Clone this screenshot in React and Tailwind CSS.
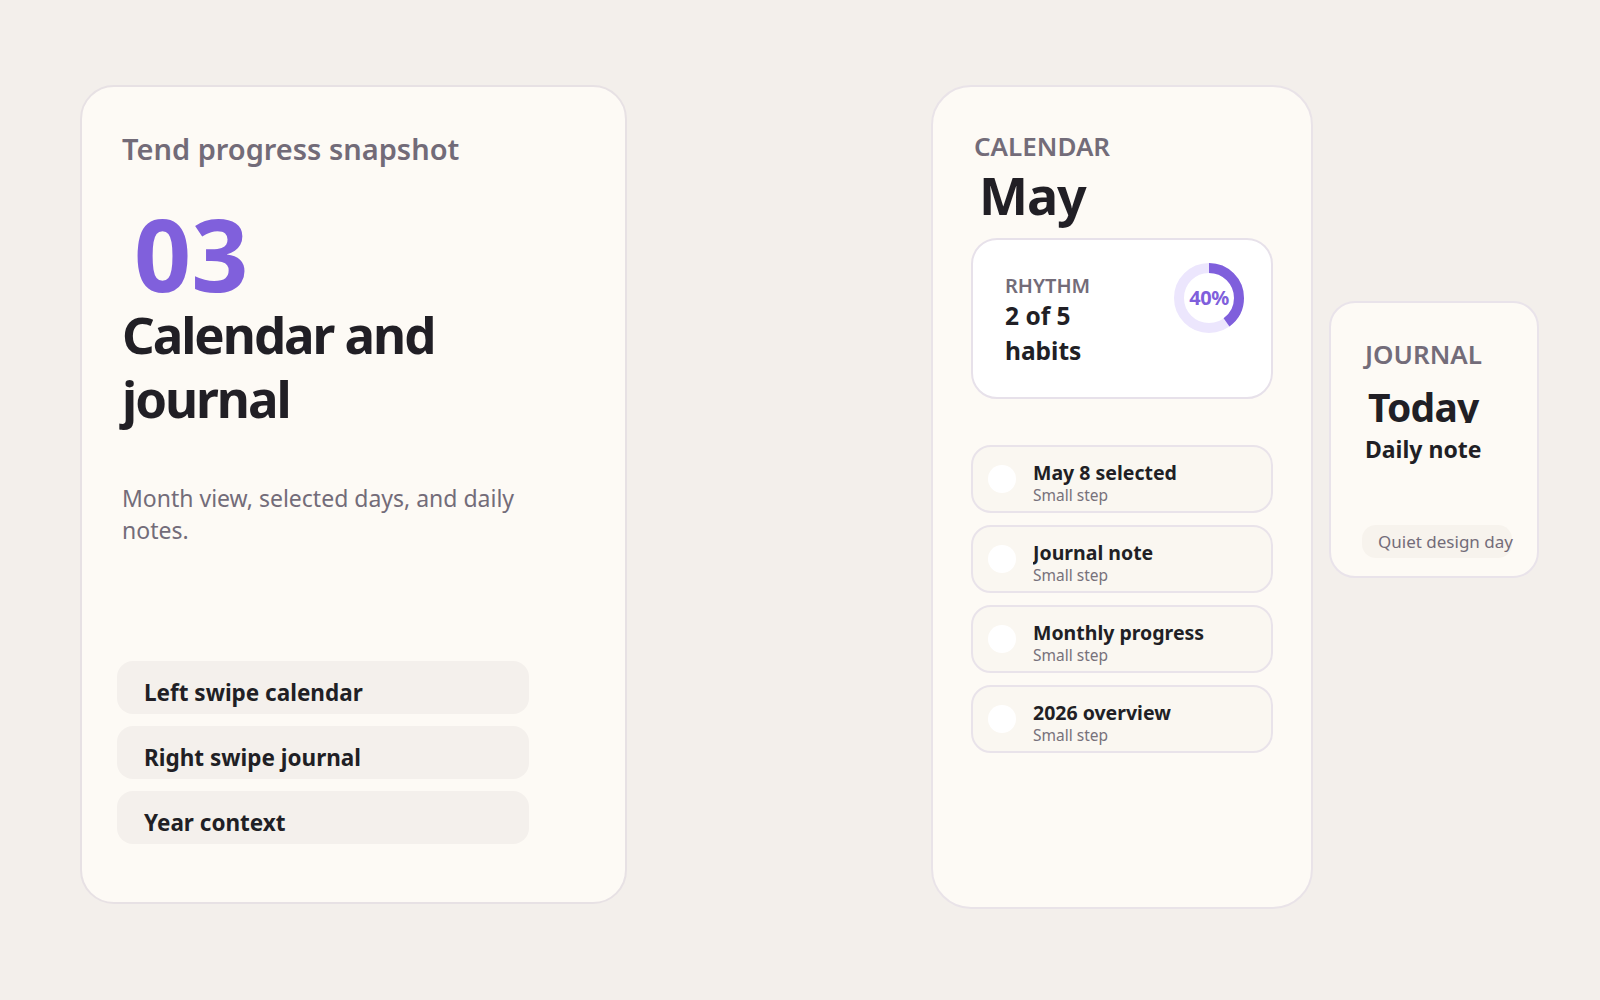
const steps = ["May 8 selected", "Journal note", "Monthly progress", "2026 overview"];
const pills = ["Left swipe calendar", "Right swipe journal", "Year context"];

function Donut({ value }) {
  const r = 30;
  const c = 2 * Math.PI * r;
  return (
    <div className="relative h-[72px] w-[72px]">
      <svg viewBox="0 0 72 72" className="h-full w-full -rotate-90">
        <circle cx="36" cy="36" r={r} fill="none" stroke="#ece6fd" strokeWidth="10" />
        <circle
          cx="36"
          cy="36"
          r={r}
          fill="none"
          stroke="#7f5fdc"
          strokeWidth="10"
          strokeDasharray={`${(c * value) / 100} ${c}`}
        />
      </svg>
      <div className="absolute inset-0 flex items-center justify-center text-[20px] font-bold tracking-[-0.02em] text-[#7f5fdc]">{value}%</div>
    </div>
  );
}

export default function App() {
  return (
    <div
      className="flex min-h-screen items-start bg-[#f3efeb] pl-[80px] pt-[85px] text-[#211f25]"
      style={{ fontFamily: '"Noto Sans", "Open Sans", sans-serif' }}
    >
      <section className="flex h-[819px] w-[547px] flex-col rounded-[34px] border-2 border-[#e7e1e4] bg-[#fdfaf5] px-[40px] pb-[58px] pt-[44px]">
        <h1 className="text-[29px] font-semibold leading-[36px] text-[#726b78]">Tend progress snapshot</h1>
        <div className="mt-[36px] pl-[12px] text-[100px] font-bold leading-[100px] text-[#8060dc]">03</div>
        <h2 className="-mt-[1px] text-[51px] font-bold leading-[64px] tracking-[-0.04em]">
          Calendar and
          <br />
          journal
        </h2>
        <p className="mt-[52px] w-[420px] text-[23px] leading-[32px] text-[#736c79]">
          Month view, selected days, and daily notes.
        </p>
        <div className="mt-auto -ml-[5px] flex w-[412px] flex-col gap-[12px]">
          {pills.map((p) => (
            <div key={p} className="h-[53px] rounded-[16px] bg-[#f4f0ec] pl-[27px] pt-[15px] text-[22.5px] font-bold leading-[34px]">
              {p}
            </div>
          ))}
        </div>
      </section>

      <section className="ml-[304px] flex h-[824px] w-[382px] flex-col rounded-[40px] border-2 border-[#e9e3e8] bg-[#fdfaf5] px-[38px] pt-[44px]">
        <div className="ml-[3px] text-[26px] font-semibold leading-[30px] text-[#736c79]">CALENDAR</div>
        <div className="ml-[8px] mt-[3px] text-[52px] font-bold leading-[62px] tracking-[-0.02em]">May</div>
        <div className="mt-[12px] flex h-[161px] items-start justify-between rounded-[26px] border-2 border-[#e7e1ea] bg-white pl-[32px] pr-[26px] pt-[34px]">
          <div>
            <div className="text-[20px] font-semibold leading-[24px] text-[#736c79]">RHYTHM</div>
            <div className="w-[110px] text-[24.5px] font-bold leading-[35px]">2 of 5 habits</div>
          </div>
          <div className="-mt-[12px]">
            <Donut value={40} />
          </div>
        </div>
        <div className="mt-[46px] flex flex-col gap-[12px]">
          {steps.map((s) => (
            <div key={s} className="flex h-[68px] items-center gap-[17px] rounded-[20px] border-2 border-[#e9e3ea] bg-[#faf7f1] px-[15px]">
              <div className="h-[28px] w-[28px] shrink-0 rounded-full bg-white" />
              <div className="pt-[8px]">
                <div className="h-[25px] overflow-hidden text-[19.5px] font-bold leading-[24px]">{s}</div>
                <div className="text-[15.5px] leading-[19px] text-[#77717b]">Small step</div>
              </div>
            </div>
          ))}
        </div>
      </section>

      <section className="ml-[16px] mt-[216px] flex h-[277px] w-[210px] flex-col overflow-hidden rounded-[26px] border-2 border-[#e9e3ea] bg-[#fdfaf5] pl-[34px] pt-[36px]">
        <div className="text-[26px] font-semibold leading-[30px] text-[#736c79]">JOURNAL</div>
        <div className="ml-[3px] mt-[15px] h-[39px] overflow-hidden text-[39px] font-bold leading-[46px] tracking-[-0.02em]">Today</div>
        <div className="mt-[11px] text-[23px] font-bold leading-[30px]">Daily note</div>
        <div className="-ml-[3px] mt-auto mb-[18px] w-[150px] whitespace-nowrap rounded-[14px] bg-[#f7f3ed] pl-[16px] py-[4px] text-[17px] leading-[25px] text-[#736c79]">
          Quiet design day
        </div>
      </section>
    </div>
  );
}
